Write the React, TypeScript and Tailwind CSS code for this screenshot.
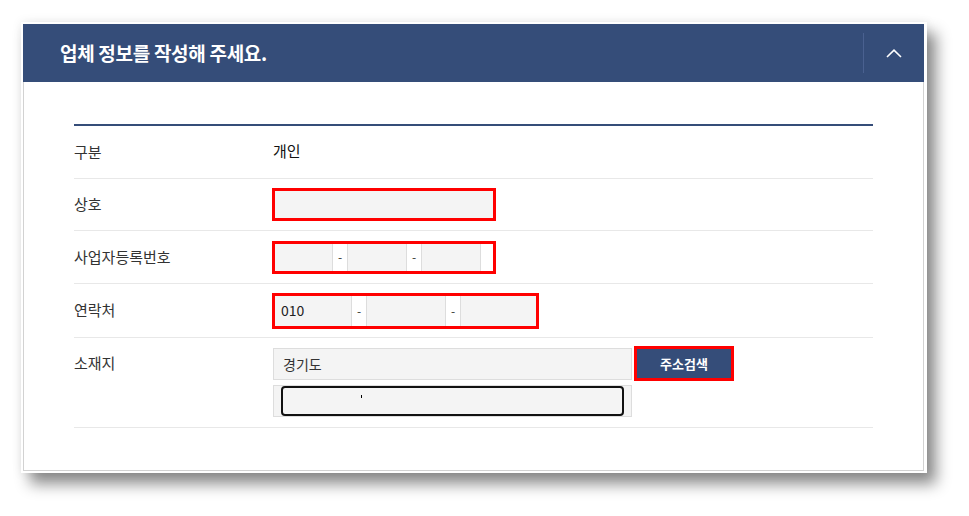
import { ReactNode } from "react";

const font = { fontFamily: '"Noto Sans CJK KR", "Noto Sans", sans-serif' };

function Row({
  label,
  children,
  h,
  top = false,
}: {
  label: string;
  children?: ReactNode;
  h: string;
  top?: boolean;
}) {
  return (
    <div className={`flex border-b border-[#e8e8e8] ${h} ${top ? "items-start pt-[8px]" : "items-center"}`}>
      <div className={`w-[199px] shrink-0 text-[15px] text-[#333] ${top ? "h-[35px] flex items-center" : ""}`}>
        {label}
      </div>
      <div className="flex-1">{children}</div>
    </div>
  );
}

function Seg({ w, last = false }: { w: string; last?: boolean }) {
  return <div className={`${w} h-full bg-[#f4f4f4] border-l border-[#dddddd] ${last ? "" : "border-r"}`} />;
}

function Dash() {
  return <div className="w-[14px] h-full flex items-center justify-center text-[12px] text-[#333]">-</div>;
}

export default function App() {
  return (
    <div className="w-[969px] h-[516px] bg-white pt-[22px] pl-[21px]" style={font}>
      <div className="w-[906px] h-[451px] bg-white pl-[2px] pr-[3px] py-[2px] shadow-[9px_11px_14px_rgba(0,0,0,0.45),0_0_10px_rgba(0,0,0,0.08)]">
        <div className="h-full flex flex-col border-x border-b border-[#d2d2d2]">
          {/* header */}
          <div className="h-[58px] -mx-px bg-[#354d79] flex items-center">
            <h2 className="flex-1 pl-[37px] text-[19px] font-bold text-white tracking-[-0.3px]">업체 정보를 작성해 주세요.</h2>
            <div className="h-[40px] w-px bg-[#4a6190]" />
            <div className="w-[60px] flex items-center justify-center">
              <svg width="16" height="9" viewBox="0 0 16 9" fill="none">
                <polyline points="1,8 8,1.2 15,8" stroke="white" strokeWidth="1.6" />
              </svg>
            </div>
          </div>

          {/* body */}
          <div className="px-[50px] pt-[42px]">
            <div className="h-[2px] bg-[#354d79]" />
            <Row label="구분" h="h-[53px]">
              <span className="text-[15px] text-[#111] relative -top-[2px]">개인</span>
            </Row>
            <Row label="상호" h="h-[52px]">
              <div className="ml-[-1px] w-[224px] h-[33px] border-[3px] border-[#ff0000] bg-[#f4f4f4]" />
            </Row>
            <Row label="사업자등록번호" h="h-[53px]">
              <div className="ml-[-1px] w-[224px] h-[33px] border-[3px] border-[#ff0000] flex bg-white">
                <div className="w-[58px] h-full bg-[#f4f4f4] border-r border-[#dddddd]" />
                <Dash />
                <Seg w="w-[60px]" />
                <Dash />
                <Seg w="w-[60px]" />
              </div>
            </Row>
            <Row label="연락처" h="h-[54px]">
              <div className="ml-[-1px] w-[267px] h-[36px] border-[3px] border-[#ff0000] flex bg-white">
                <div className="w-[77px] h-full bg-[#f4f4f4] border-r border-[#dddddd] flex items-center pl-[6px] text-[14px] text-[#222]">
                  010
                </div>
                <Dash />
                <Seg w="w-[80px]" />
                <Dash />
                <Seg w="w-[76px]" last />
              </div>
            </Row>
            <Row label="소재지" h="h-[90px]" top>
              <div className="flex items-start gap-[2px]">
                <div className="flex flex-col gap-[5px] pt-[2px]">
                  <div className="w-[359px] h-[32px] bg-[#f4f4f4] border border-[#dddddd] flex items-center pl-[9px] text-[14px] text-[#333]">
                    경기도
                  </div>
                  <div className="w-[359px] h-[32px] bg-[#f4f4f4] border border-[#dddddd] px-[7px]">
                    <div className="relative h-full border-2 border-[#111] rounded-[4px]">
                      <span className="absolute left-[78px] top-[7px] w-px h-[3px] bg-black" />
                    </div>
                  </div>
                </div>
                <button className="w-[100px] h-[35px] bg-[#354d79] border-[3px] border-[#ff0000] text-white text-[13px] font-bold flex items-center justify-center">
                  주소검색
                </button>
              </div>
            </Row>
          </div>
        </div>
      </div>
    </div>
  );
}
